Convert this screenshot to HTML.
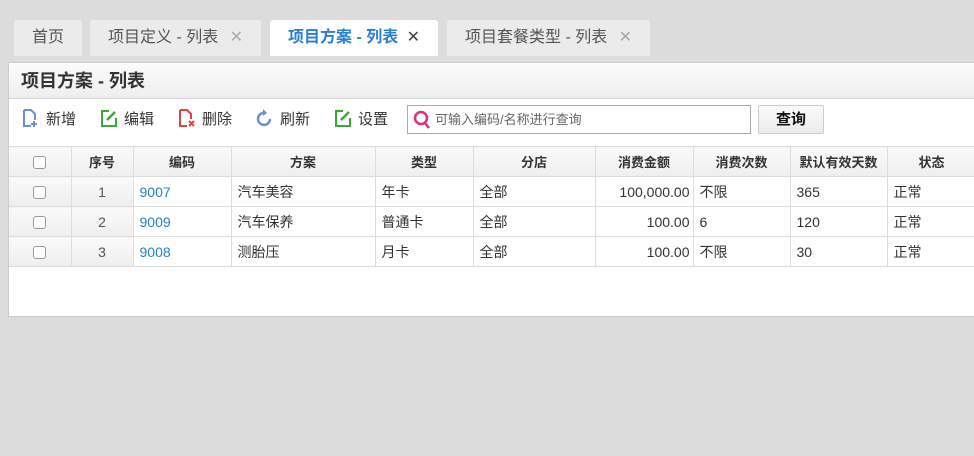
<!DOCTYPE html>
<html><head><meta charset="utf-8"><style>
*{box-sizing:border-box;margin:0;padding:0}
body{width:974px;height:456px;overflow:hidden;background:#dcdcdc;font-family:"Liberation Sans","Noto Sans CJK SC",sans-serif;font-size:14px;color:#333;position:relative}
.tab{position:absolute;top:20px;height:36px;background:#ebebeb;border-radius:3px 3px 0 0;line-height:36px;font-size:16px;color:#555;padding-left:18px}
.tab .x{position:absolute;right:18px;top:0;color:#aaa;font-size:16px}
.tab.act{background:#fff;color:#2b7fd3;font-weight:bold}
.tab.act .x{color:#444;font-weight:normal}
.panel{position:absolute;left:8px;top:62px;width:968px;height:255px;background:#fff;border:1px solid #ccc}
.title{height:36px;background:linear-gradient(#fcfcfc,#eee);border-bottom:1px solid #d4d4d4;font-size:18px;font-weight:bold;line-height:36px;padding-left:12px;color:#333}
.tb{position:absolute;top:45px;font-size:15px;color:#333;line-height:24px}
.ic{position:absolute;top:0}
.search{position:absolute;left:398px;top:42px;width:344px;height:29px;border:1px solid #aaa;font-size:13px;color:#666;line-height:27px;padding-left:27px}
.btn{position:absolute;left:749px;top:42px;width:66px;height:29px;border:1px solid #ccc;background:linear-gradient(#fafafa,#ececec);border-radius:2px;font-weight:bold;font-size:15px;text-align:center;line-height:27px;color:#111}
table{position:absolute;left:0;top:83px;border-collapse:collapse;table-layout:fixed;width:967px}
td,th{border:1px solid #ddd;height:30px;font-size:14px;white-space:nowrap;overflow:hidden;padding:0 6px}
th{background:linear-gradient(#fafafa,#eee);font-weight:bold;font-size:13px;text-align:center}
td.n{background:linear-gradient(#fafafa,#eee);text-align:center;color:#555}
td.c{color:#2a7ec4}
td.r{text-align:right;padding-right:3px}
.cb{display:inline-block;width:13px;height:13px;border:1px solid #999;border-radius:3px;background:#fff;vertical-align:middle}
tr th:first-child,tr td:first-child{border-left:none}
</style></head><body>
<div class="tab" style="left:14px;width:68px">首页</div>
<div class="tab" style="left:90px;width:171px">项目定义 - 列表<span class="x">✕</span></div>
<div class="tab act" style="left:270px;width:168px">项目方案 - 列表<span class="x">✕</span></div>
<div class="tab" style="left:447px;width:203px">项目套餐类型 - 列表<span class="x">✕</span></div>
<div class="panel">
<div class="title">项目方案 - 列表</div>
<div class="tb" style="left:13px"><svg class="ic" width="16" height="20" viewBox="0 0 16 20"><path d="M2 2h7l4 4v6M2 2v16h7" fill="none" stroke="#6b8fd6" stroke-width="2"/><path d="M12 13v6M9 16h6" stroke="#6b8fd6" stroke-width="2"/></svg><span style="margin-left:24px">新增</span></div>
<div class="tb" style="left:91px"><svg class="ic" width="18" height="20" viewBox="0 0 18 20"><path d="M9 3H2v15h14v-8" fill="none" stroke="#3aa83a" stroke-width="2"/><path d="M7 12l8-8" stroke="#3aa83a" stroke-width="2.5"/></svg><span style="margin-left:24px">编辑</span></div>
<div class="tb" style="left:169px"><svg class="ic" width="18" height="20" viewBox="0 0 18 20"><path d="M2 2h7l4 4v5M2 2v16h7" fill="none" stroke="#e04040" stroke-width="2"/><path d="M11 13l5 5M16 13l-5 5" stroke="#e04040" stroke-width="2"/></svg><span style="margin-left:24px">删除</span></div>
<div class="tb" style="left:247px"><svg class="ic" width="18" height="20" viewBox="0 0 18 20"><path d="M14 11a6 6 0 1 1-5-6" fill="none" stroke="#6b8fd6" stroke-width="2.5"/><path d="M7 1l4 4-4 3z" fill="#6b8fd6"/></svg><span style="margin-left:24px">刷新</span></div>
<div class="tb" style="left:325px"><svg class="ic" width="18" height="20" viewBox="0 0 18 20"><path d="M9 3H2v15h14v-8" fill="none" stroke="#3aa83a" stroke-width="2"/><path d="M7 12l8-8" stroke="#3aa83a" stroke-width="2.5"/></svg><span style="margin-left:24px">设置</span></div>
<div class="search"><svg style="position:absolute;left:5px;top:4px" width="18" height="20" viewBox="0 0 18 20"><circle cx="8" cy="8" r="6" fill="none" stroke="#e0307a" stroke-width="2.5"/><path d="M12 13l4 5" stroke="#e0307a" stroke-width="2.5"/></svg>可输入编码/名称进行查询</div>
<div class="btn">查询</div>
<table>
<colgroup><col style="width:62px"><col style="width:62px"><col style="width:98px"><col style="width:144px"><col style="width:98px"><col style="width:122px"><col style="width:98px"><col style="width:97px"><col style="width:97px"><col style="width:89px"></colgroup>
<tr><th><span class="cb"></span></th><th>序号</th><th>编码</th><th>方案</th><th>类型</th><th>分店</th><th>消费金额</th><th>消费次数</th><th>默认有效天数</th><th>状态</th></tr>
<tr><td class="n"><span class="cb"></span></td><td class="n">1</td><td class="c">9007</td><td>汽车美容</td><td>年卡</td><td>全部</td><td class="r">100,000.00</td><td>不限</td><td>365</td><td>正常</td></tr>
<tr><td class="n"><span class="cb"></span></td><td class="n">2</td><td class="c">9009</td><td>汽车保养</td><td>普通卡</td><td>全部</td><td class="r">100.00</td><td>6</td><td>120</td><td>正常</td></tr>
<tr><td class="n"><span class="cb"></span></td><td class="n">3</td><td class="c">9008</td><td>测胎压</td><td>月卡</td><td>全部</td><td class="r">100.00</td><td>不限</td><td>30</td><td>正常</td></tr>
</table>
</div>
</body></html>
